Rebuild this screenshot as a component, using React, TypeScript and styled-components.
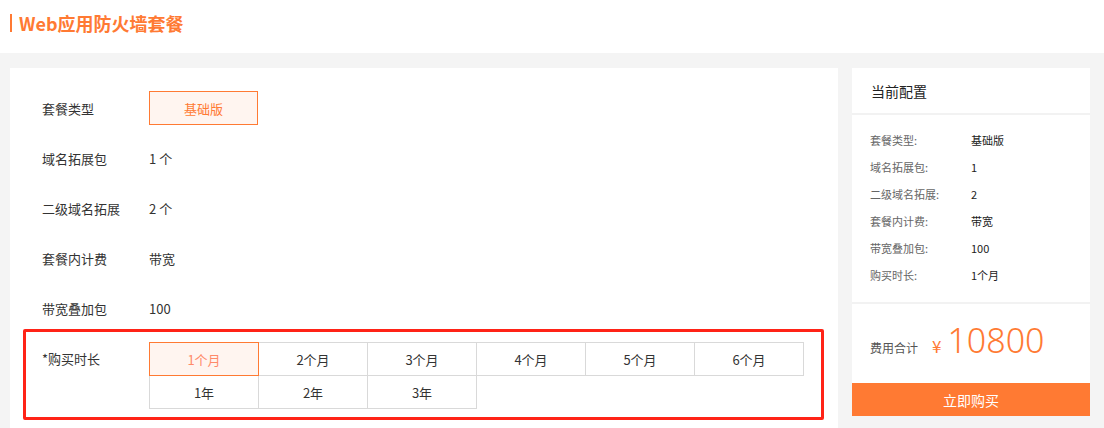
import React, { useState } from 'react'
import styled, { createGlobalStyle } from 'styled-components'

const ORANGE = '#ff7a33'

const GlobalStyle = createGlobalStyle`
  body {
    margin: 0;
    background: #f4f4f4;
    font-family: "Noto Sans CJK SC", "Noto Sans", "Liberation Sans", sans-serif;
    color: #333;
  }
`

const Page = styled.div`
  width: 1104px;
  height: 428px;
  overflow: hidden;
`

const Header = styled.div`
  height: 53px;
  background: #fff;
  display: flex;
  align-items: center;
  padding-left: 10px;
  box-sizing: border-box;
`

const Title = styled.h1`
  margin: 0;
  font-size: 18px;
  font-weight: 700;
  color: ${ORANGE};
  line-height: 18px;
  border-left: 2px solid ${ORANGE};
  padding-left: 7px;
  margin-top: -8px;
`

const Body = styled.div`
  display: flex;
  gap: 14px;
  padding: 15px 14px 0 10px;
`

const MainPanel = styled.div`
  width: 828px;
  height: 400px;
  background: #fff;
  padding-top: 15px;
  box-sizing: border-box;
`

const Row = styled.div`
  height: 50px;
  display: flex;
  align-items: center;
  padding-left: 32px;
  font-size: 13px;
`

const Label = styled.div`
  width: 107px;
  flex-shrink: 0;
  color: #333;
`

const Value = styled.div`
  color: #333;
`

const TypeButton = styled.div`
  width: 109px;
  height: 34px;
  box-sizing: border-box;
  border: 1px solid ${ORANGE};
  background: #fff5f0;
  color: ${ORANGE};
  display: flex;
  align-items: center;
  justify-content: center;
  font-size: 13px;
`

const Frame = styled.div`
  margin: -4px 14px 0 13px;
  border: 3px solid #ff2317;
  border-radius: 2px;
  padding: 10px 0 9px 16px;
  display: flex;
  align-items: flex-start;
  font-size: 13px;
`

const FrameLabel = styled.div`
  width: 107px;
  line-height: 33px;
  flex-shrink: 0;
`

const DurationGrid = styled.div`
  display: grid;
  grid-template-columns: repeat(6, 109px);
  grid-auto-rows: 33px;
`

const Cell = styled.div<{ $active?: boolean }>`
  width: 110px;
  height: 34px;
  box-sizing: border-box;
  border: 1px solid ${p => (p.$active ? ORANGE : '#d9d9d9')};
  background: ${p => (p.$active ? '#fff5f0' : '#fff')};
  color: ${p => (p.$active ? '#ff8a6a' : '#333')};
  position: relative;
  z-index: ${p => (p.$active ? 1 : 0)};
  display: flex;
  align-items: center;
  justify-content: center;
  font-size: 13px;
  cursor: pointer;
`

const SidePanel = styled.div`
  width: 238px;
  display: flex;
  flex-direction: column;
  background: #fff;
  align-self: flex-start;
`

const SideHeader = styled.div`
  height: 45px;
  display: flex;
  align-items: center;
  padding-left: 19px;
  font-size: 14px;
  color: #222;
  border-bottom: 2px solid #f2f2f2;
`

const SpecList = styled.div`
  padding: 11px 0 14px 18px;
  border-bottom: 2px solid #f2f2f2;
`

const SpecRow = styled.div`
  height: 27px;
  display: flex;
  align-items: center;
  font-size: 11px;
`

const SpecLabel = styled.div`
  width: 101px;
  color: #666;
`

const SpecValue = styled.div`
  color: #222;
`

const PriceRow = styled.div`
  height: 79px;
  display: flex;
  align-items: baseline;
  padding: 19px 0 0 18px;
  box-sizing: border-box;
`

const PriceLabel = styled.span`
  font-size: 12px;
  color: #555;
  margin-right: 14px;
`

const Yen = styled.span`
  font-size: 17px;
  color: ${ORANGE};
  margin-right: 6px;
`

const Amount = styled.span`
  font-family: "Noto Sans", "Liberation Sans", sans-serif;
  font-size: 34px;
  font-weight: 300;
  color: ${ORANGE};
  line-height: 34px;
`

const BuyButton = styled.button`
  height: 33px;
  border: none;
  background: ${ORANGE};
  color: #fff;
  font-family: inherit;
  font-size: 14px;
  cursor: pointer;
`

const durations = ['1个月', '2个月', '3个月', '4个月', '5个月', '6个月', '1年', '2年', '3年']

const App = () => {
  const [duration, setDuration] = useState('1个月')

  const specs: [string, string][] = [
    ['套餐类型:', '基础版'],
    ['域名拓展包:', '1'],
    ['二级域名拓展:', '2'],
    ['套餐内计费:', '带宽'],
    ['带宽叠加包:', '100'],
    ['购买时长:', duration],
  ]

  return (
    <Page>
      <GlobalStyle />
      <Header>
        <Title>Web应用防火墙套餐</Title>
      </Header>
      <Body>
        <MainPanel>
          <Row>
            <Label>套餐类型</Label>
            <TypeButton>基础版</TypeButton>
          </Row>
          <Row>
            <Label>域名拓展包</Label>
            <Value>1 个</Value>
          </Row>
          <Row>
            <Label>二级域名拓展</Label>
            <Value>2 个</Value>
          </Row>
          <Row>
            <Label>套餐内计费</Label>
            <Value>带宽</Value>
          </Row>
          <Row>
            <Label>带宽叠加包</Label>
            <Value>100</Value>
          </Row>
          <Frame>
            <FrameLabel>*购买时长</FrameLabel>
            <DurationGrid>
              {durations.map(d => (
                <Cell key={d} $active={d === duration} onClick={() => setDuration(d)}>
                  {d}
                </Cell>
              ))}
            </DurationGrid>
          </Frame>
        </MainPanel>
        <SidePanel>
          <SideHeader>当前配置</SideHeader>
          <SpecList>
            {specs.map(([k, v]) => (
              <SpecRow key={k}>
                <SpecLabel>{k}</SpecLabel>
                <SpecValue>{v}</SpecValue>
              </SpecRow>
            ))}
          </SpecList>
          <PriceRow>
            <PriceLabel>费用合计</PriceLabel>
            <Yen>¥</Yen>
            <Amount>10800</Amount>
          </PriceRow>
          <BuyButton>立即购买</BuyButton>
        </SidePanel>
      </Body>
    </Page>
  )
}

export default App
